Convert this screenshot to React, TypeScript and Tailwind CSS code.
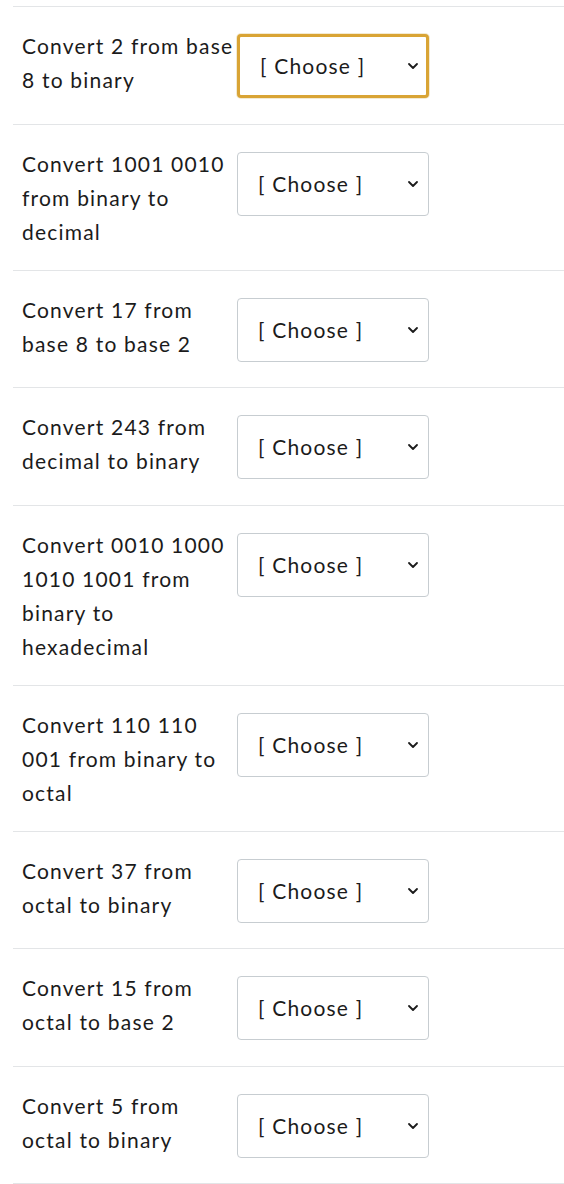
import { ChevronDown } from 'lucide-react';

const questions = [
  'Convert 2 from base 8 to binary',
  'Convert 1001 0010 from binary to decimal',
  'Convert 17 from base 8 to base 2',
  'Convert 243 from decimal to binary',
  'Convert 0010 1000 1010 1001 from binary to hexadecimal',
  'Convert 110 110 001 from binary to octal',
  'Convert 37 from octal to binary',
  'Convert 15 from octal to base 2',
  'Convert 5 from octal to binary',
];

function Choose({ focused }: { focused?: boolean }) {
  return (
    <div
      className={
        'relative mb-[4.5px] ml-[3px] mt-[5px] flex h-[64px] w-[192px] shrink-0 items-center rounded-[4px] bg-white pl-[20px] ' +
        (focused
          ? 'border-[3px] border-[#d9a435] pl-[18px] shadow-[0_0_0_1px_#f3ead2]'
          : 'border border-[#c7cdd1]')
      }
    >
      <span className="text-[21px] leading-[34px] tracking-[1.2px] text-[#1b1b1b]">[ Choose ]</span>
      <ChevronDown
        size={16}
        strokeWidth={2.75}
        className={'absolute top-1/2 -translate-y-1/2 text-[#1b1b1b] ' + (focused ? 'right-[5px]' : 'right-[7px]')}
      />
    </div>
  );
}

export default function App() {
  return (
    <div className="min-h-[1184px] bg-white pl-[13px] pt-[6px]" style={{ fontFamily: 'Lato, "Open Sans", sans-serif' }}>
      <div className="border-t border-[#e3e5e7]">
        {questions.map((q, i) => (
          <div key={i} className="flex items-start border-b border-[#e3e5e7] pb-[21px] pl-[9px] pt-[22px]">
            <div className="w-[212px] shrink-0 text-[21px] leading-[34px] tracking-[1.2px] text-[#1b1b1b]">{q}</div>
            <Choose focused={i === 0} />
          </div>
        ))}
      </div>
    </div>
  );
}
